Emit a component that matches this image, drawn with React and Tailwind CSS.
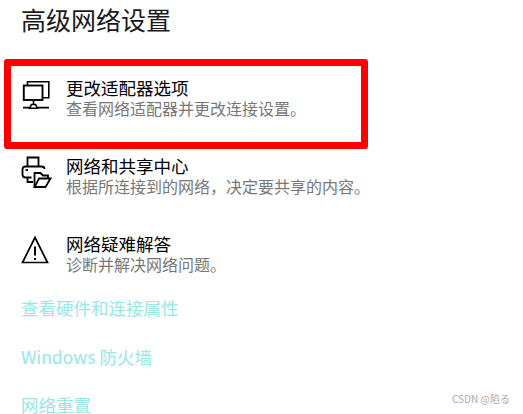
function MonitorIcon() {
  return (
    <svg width="34" height="36" viewBox="0 0 34 36" fill="none" stroke="#000" strokeWidth="1.6" className="shrink-0">
      <path d="M6.5 9V5.8H27.8V21.8H21.5" />
      <rect x="2.8" y="9.5" width="18.7" height="14.5" strokeWidth="1.9" />
      <path d="M12.5 24V28" />
      <path d="M8.5 32.3L10.5 28.5H14.5L16.5 32.3Z" />
      <path d="M2 31.6H8.5M16.5 31.6H28" />
    </svg>
  );
}

function PrinterFolderIcon() {
  return (
    <svg width="34" height="36" viewBox="0 0 34 36" fill="none" stroke="#000" strokeWidth="1.8" className="shrink-0">
      <path d="M6.5 12.5V3.5H17.5V12.5" />
      <path d="M10.5 23.5H4.5C2.5 23.5 1.5 22.5 1.5 20.5V15.5C1.5 13.5 2.5 12.5 4.5 12.5H20.5C22.5 12.5 23.5 13.5 23.5 15" />
      <path d="M6.5 23.5V28H12" />
      <path d="M4.5 16H7" />
      <path d="M13.5 33V19H19.5L22 21.5H27V24.5" />
      <path d="M13.5 33H24.5L29.5 24.5H18L13.5 33Z" />
    </svg>
  );
}

function WarningIcon() {
  return (
    <svg width="34" height="36" viewBox="0 0 34 36" fill="none" stroke="#000" strokeWidth="1.7" className="shrink-0">
      <path d="M14 5.5L1.5 30.5H26.5L14 5.5Z" />
      <path d="M14 14.5V23.5" strokeWidth="2" />
      <rect x="13" y="26" width="2" height="2" fill="#000" stroke="none" />
    </svg>
  );
}

function Row({ icon, title, sub, className }) {
  return (
    <div className={"flex items-start " + (className || "")}>
      <div className="w-[45px] h-[36px] shrink-0">{icon}</div>
      <div className="flex flex-col">
        <div className="text-[17.5px] leading-[24px] text-black whitespace-nowrap">{title}</div>
        <div className="text-[16px] leading-[16px] text-[#777777] whitespace-nowrap">{sub}</div>
      </div>
    </div>
  );
}

export default function App() {
  return (
    <div className="relative w-[523px] h-[414px] overflow-hidden bg-white font-['Noto_Sans_CJK_SC','Noto_Sans',sans-serif]">
      <h1 className="pl-[21px] pt-[2px] text-[25px] leading-[34px] font-normal text-[#1a1a1a]">高级网络设置</h1>
      <div className="ml-[4px] mt-[23px] w-[364px] h-[90px] rounded-[3px] border-[7px] border-[#ff0000] pl-[10px] pt-[10px]">
        <Row icon={<MonitorIcon />} title="更改适配器选项" sub="查看网络适配器并更改连接设置。" />
      </div>
      <div className="pl-[21px] mt-[5px] flex flex-col">
        <Row icon={<PrinterFolderIcon />} title="网络和共享中心" sub="根据所连接到的网络，决定要共享的内容。" />
        <Row className="mt-[38px]" icon={<WarningIcon />} title="网络疑难解答" sub="诊断并解决网络问题。" />
        <div className="mt-[24px] text-[17.5px] leading-[24px] text-[#97e6e8] whitespace-nowrap">查看硬件和连接属性</div>
        <div className="mt-[25px] text-[17.5px] leading-[24px] text-[#97e6e8] whitespace-nowrap">Windows 防火墙</div>
        <div className="mt-[24px] text-[17.5px] leading-[24px] text-[#97e6e8] whitespace-nowrap">网络重置</div>
      </div>
      <div className="absolute left-[452px] top-[392px] text-[10px] leading-[14px] text-[#aaaaaa] whitespace-nowrap">CSDN @陷る</div>
    </div>
  );
}
